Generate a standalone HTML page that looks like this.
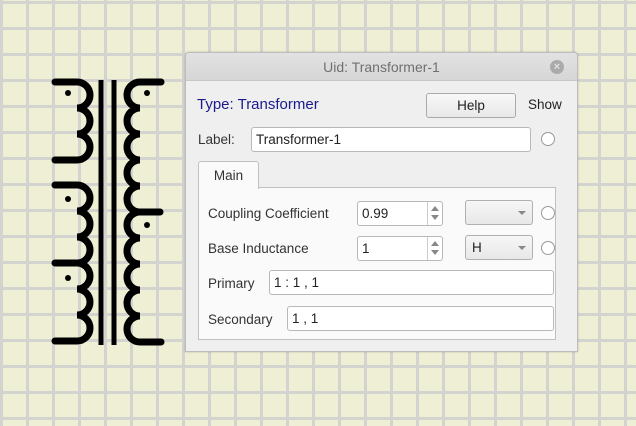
<!DOCTYPE html>
<html><head><style>
*{box-sizing:border-box;margin:0;padding:0}
body{width:636px;height:426px;overflow:hidden;position:relative;font-family:"Liberation Sans","DejaVu Sans",sans-serif;font-size:13.5px;color:#333;
background-color:#efefd6;
background-image:linear-gradient(90deg,#d3d3d0 3px,transparent 3px),linear-gradient(#d3d3d0 3px,transparent 3px);
background-size:26px 26px;background-position:0 1px,0 1px}
.a{position:absolute}
.dlg{left:185px;top:52px;width:393px;height:300px;background:#efefef;border:1px solid #bdbdbd;border-radius:4px 4px 0 0;box-shadow:0 0 2px rgba(0,0,0,.2)}
.tb{left:0;top:0;width:391px;height:28px;background:linear-gradient(#e2e2e2,#d6d6d6);border-bottom:1px solid #c8c8c8;border-radius:4px 4px 0 0;text-align:center;line-height:28px;color:#707070;font-size:14px}
.inp{background:#fff;border:1px solid #b8b8b8;border-radius:3px;height:25px;line-height:23px;padding-left:4px;color:#222}
.rad{width:14px;height:14px;border:1px solid #999;border-radius:50%;background:#fff}
.btn{background:linear-gradient(#f8f8f8,#e8e8e8);border:1px solid #aaa;border-radius:3px;text-align:center;color:#222}
.cmb{background:linear-gradient(#f6f6f6,#e8e8e8);border:1px solid #b0b0b0;border-radius:3px;height:25px;line-height:23px;padding-left:6px;color:#222}
.arr{position:absolute;right:6px;top:10px;width:0;height:0;border-left:4px solid transparent;border-right:4px solid transparent;border-top:4px solid #888}
.spin{position:absolute;right:0;top:0;width:15px;height:23px;border-left:1px solid #ccc}
.spin:before{content:"";position:absolute;left:3px;top:4px;border-left:4px solid transparent;border-right:4px solid transparent;border-bottom:5px solid #888}
.spin:after{content:"";position:absolute;left:3px;top:13px;border-left:4px solid transparent;border-right:4px solid transparent;border-top:5px solid #888}
</style></head><body>
<svg class="a" style="left:0;top:0" width="200" height="426">
<g stroke="#000" stroke-width="7" fill="none" stroke-linecap="round">
<path d="M55 82H77 A13 13 0 0 1 77 108 A13 13 0 0 1 77 134 A13 13 0 0 1 77 160 H55"/>
<path d="M55 185H77 A13 13 0 0 1 77 211 A13 13 0 0 1 77 237 A13 13 0 0 1 77 263 H55"/>
<path d="M77 263 A13 13 0 0 1 77 289 A13 13 0 0 1 77 315 A13 13 0 0 1 77 341 H55"/>
<path d="M161 82H140 A13 13 0 0 0 140 108 A13 13 0 0 0 140 134 A13 13 0 0 0 140 160 A13 13 0 0 0 140 186 A13 13 0 0 0 140 212 A13 13 0 0 0 140 238 A13 13 0 0 0 140 264 A13 13 0 0 0 140 290 A13 13 0 0 0 140 316 A13 13 0 0 0 140 342 H161"/>
<path d="M140 212H160"/>
</g>
<g stroke="#000" stroke-width="5"><path d="M101 80V345M114 80V345"/></g>
<g fill="#000"><circle cx="68" cy="93" r="3"/><circle cx="68" cy="199" r="3"/><circle cx="68" cy="278" r="3"/><circle cx="147" cy="93" r="3"/><circle cx="147" cy="225" r="3"/></g>
</svg>
<div class="a dlg">
<div class="a tb">Uid: Transformer-1</div>
<div class="a" style="left:364px;top:7px;width:14px;height:14px;border-radius:50%;background:#aaa;color:#e0e0e0;font-size:11px;line-height:14px;text-align:center;font-weight:bold">×</div>
<div class="a" style="left:11px;top:43px;color:#1a1a8c;font-size:15px">Type: Transformer</div>
<div class="a btn" style="left:240px;top:40px;width:90px;height:25px;line-height:23px">Help</div>
<div class="a" style="left:342px;top:44px;color:#222">Show</div>
<div class="a" style="left:12px;top:79px">Label:</div>
<div class="a inp" style="left:65px;top:74px;width:280px">Transformer-1</div>
<div class="a rad" style="left:355px;top:79px"></div>
<div class="a" style="left:12px;top:134px;width:358px;height:153px;background:#fafafa;border:1px solid #c0c0c0"></div>
<div class="a" style="left:12px;top:108px;width:61px;height:28px;background:#fafafa;border:1px solid #c0c0c0;border-bottom:none;border-radius:3px 3px 0 0;text-align:center;line-height:27px">Main</div>
<div class="a" style="left:22px;top:153px">Coupling Coefficient</div>
<div class="a inp" style="left:171px;top:148px;width:86px">0.99<div class="spin"></div></div>
<div class="a cmb" style="left:279px;top:147px;width:68px"><div class="arr"></div></div>
<div class="a rad" style="left:355px;top:153px"></div>
<div class="a" style="left:22px;top:188px">Base Inductance</div>
<div class="a inp" style="left:171px;top:183px;width:86px">1<div class="spin"></div></div>
<div class="a cmb" style="left:279px;top:182px;width:68px">H<div class="arr"></div></div>
<div class="a rad" style="left:355px;top:188px"></div>
<div class="a" style="left:22px;top:223px">Primary</div>
<div class="a inp" style="left:83px;top:217px;width:285px">1 : 1 , 1</div>
<div class="a" style="left:22px;top:259px">Secondary</div>
<div class="a inp" style="left:101px;top:253px;width:267px">1 , 1</div>
</div>
</body></html>
